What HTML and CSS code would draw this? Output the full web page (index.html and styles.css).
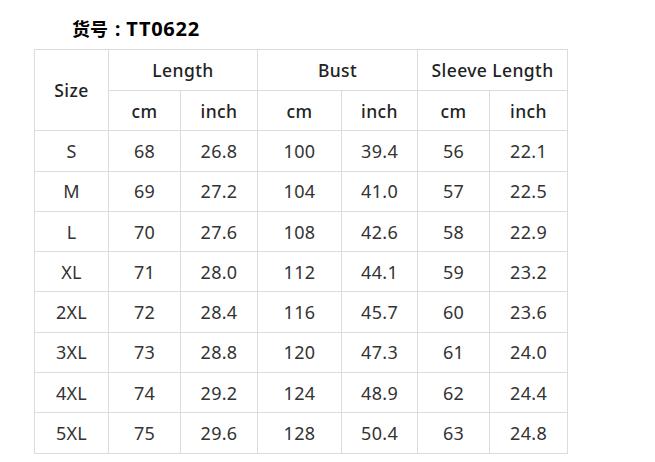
FILE: index.html
```html
<!DOCTYPE html>
<html>
<head>
<meta charset="utf-8">
<link rel="stylesheet" href="styles.css">
</head>
<body>
<div class="page">
  <h1 class="title"><span class="cn">货号</span><span class="colon">:</span><span class="code">TT0622</span></h1>
  <table class="size-table">
    <colgroup>
      <col class="c-size"><col class="c1"><col class="c2"><col class="c3"><col class="c4"><col class="c5"><col class="c6">
    </colgroup>
    <thead>
      <tr class="hr1">
        <th rowspan="2">Size</th>
        <th colspan="2">Length</th>
        <th colspan="2">Bust</th>
        <th colspan="2">Sleeve Length</th>
      </tr>
      <tr class="hr2">
        <th>cm</th><th>inch</th><th>cm</th><th>inch</th><th>cm</th><th>inch</th>
      </tr>
    </thead>
    <tbody>
      <tr><td>S</td><td>68</td><td>26.8</td><td>100</td><td>39.4</td><td>56</td><td>22.1</td></tr>
      <tr><td>M</td><td>69</td><td>27.2</td><td>104</td><td>41.0</td><td>57</td><td>22.5</td></tr>
      <tr><td>L</td><td>70</td><td>27.6</td><td>108</td><td>42.6</td><td>58</td><td>22.9</td></tr>
      <tr><td>XL</td><td>71</td><td>28.0</td><td>112</td><td>44.1</td><td>59</td><td>23.2</td></tr>
      <tr><td>2XL</td><td>72</td><td>28.4</td><td>116</td><td>45.7</td><td>60</td><td>23.6</td></tr>
      <tr><td>3XL</td><td>73</td><td>28.8</td><td>120</td><td>47.3</td><td>61</td><td>24.0</td></tr>
      <tr><td>4XL</td><td>74</td><td>29.2</td><td>124</td><td>48.9</td><td>62</td><td>24.4</td></tr>
      <tr><td>5XL</td><td>75</td><td>29.6</td><td>128</td><td>50.4</td><td>63</td><td>24.8</td></tr>
    </tbody>
  </table>
</div>
</body>
</html>
```

FILE: styles.css
```css
html, body {
  margin: 0;
  padding: 0;
  background: #ffffff;
}

.page {
  padding: 18px 0 0 34px;
  font-family: "Noto Sans", "Noto Sans CJK SC", sans-serif;
  color: #333;
}

.title {
  display: flex;
  align-items: baseline;
  margin: 0 0 10px 38px;
  font-family: "Noto Sans", "Noto Sans CJK SC", sans-serif;
  font-size: 18px;
  font-weight: 700;
  line-height: 20px;
  color: #000;
}

.title .cn {
  font-family: "Noto Sans CJK SC", sans-serif;
}

.title .colon {
  margin: 0 6px 0 7px;
  font-size: 19px;
}

.title .code {
  font-size: 20px;
  letter-spacing: 0.7px;
}

.size-table {
  border-collapse: collapse;
  table-layout: fixed;
  width: 533px;
}

.c-size { width: 74px; }
.c1 { width: 72px; }
.c2 { width: 77px; }
.c3 { width: 84px; }
.c4 { width: 76px; }
.c5 { width: 72px; }
.c6 { width: 78px; }

.size-table th,
.size-table td {
  border: 1px solid #dcdcdc;
  padding: 0;
  text-align: center;
  vertical-align: middle;
  font-size: 18px;
  font-weight: 400;
  height: 39.3px;
  letter-spacing: 0.3px;
}

.size-table th {
  font-size: 17.5px;
  font-weight: 500;
  color: #222;
  letter-spacing: 0.4px;
}

.hr1 th {
  height: 40px;
}
```
